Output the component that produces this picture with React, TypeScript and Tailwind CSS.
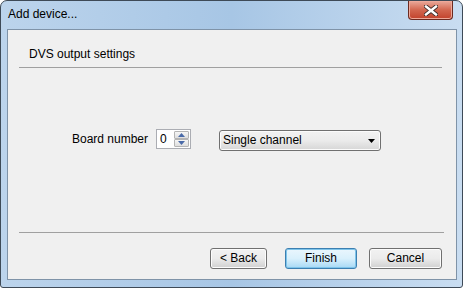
import React from 'react'

const font = { fontFamily: '"Segoe UI", "Liberation Sans", Arial, sans-serif' }

function CloseGlyph() {
  return (
    <svg width="14" height="11" viewBox="0 0 14 11">
      <path
        d="M2 1.5 L12 9.5 M12 1.5 L2 9.5"
        stroke="#3a2a28"
        strokeWidth="4.2"
        strokeLinecap="square"
        fill="none"
      />
      <path
        d="M2 1.5 L12 9.5 M12 1.5 L2 9.5"
        stroke="#ffffff"
        strokeWidth="2.4"
        strokeLinecap="square"
        fill="none"
      />
    </svg>
  )
}

function WinButton({ label, focused }: { label: string; focused?: boolean }) {
  return (
    <button
      className={
        focused
          ? 'flex h-[21px] w-full items-center justify-center rounded-[3px] border border-[#3c7fb1] bg-gradient-to-b from-[#eaf6fd] via-[#d9f0fc] to-[#a7d9f5] text-[12px] leading-[15px] text-black shadow-[inset_0_0_0_1px_#7ec4ea]'
          : 'flex h-[21px] w-full items-center justify-center rounded-[3px] border border-[#707070] bg-gradient-to-b from-[#f2f2f2] via-[#ebebeb] to-[#d0d0d0] text-[12px] leading-[15px] text-black shadow-[inset_0_0_0_1px_#fcfcfc]'
      }
    >
      {label}
    </button>
  )
}

export default function App() {
  return (
    <div className="h-[288px] w-[463px] overflow-hidden" style={font}>
      <div className="flex h-full w-full flex-col rounded-t-[7px] rounded-b-[3px] border border-[#3e4a57] bg-gradient-to-r from-[#bcd4ec] via-[#a7c6e5] to-[#c9ddf1] pb-[7px] pl-[6px] pr-[5px]">
        {/* Title bar */}
        <div className="flex h-[28px] items-start justify-between">
          <div className="pt-[6px] pl-[1px] text-[12px] leading-[15px] text-black">Add device...</div>
          <div className="mr-[4px] flex h-[19px] w-[45px] items-center justify-center rounded-b-[4px] border border-t-0 border-[#6b2a20] bg-gradient-to-b from-[#e9a99b] via-[#d2664f] to-[#c2412b] shadow-[inset_0_0_0_1px_#eea99a]">
            <CloseGlyph />
          </div>
        </div>

        {/* Client area */}
        <div className="flex flex-1 flex-col border border-[#7f93a8] bg-[#f0f0f0] text-[12px] text-black">
          <div className="pl-[21px] pt-[17px] leading-[15px]">DVS output settings</div>
          <div className="ml-[11px] mr-[14px] mt-[5px] h-px bg-[#a0a0a0]" />

          <div className="flex flex-1 items-start pt-[61px]">
            <div className="ml-[62px] flex h-[21px] w-[86px] items-center justify-end whitespace-nowrap pr-[8px] leading-[15px]">
              Board number
            </div>
            <div className="flex h-[20px]">
              <div className="flex h-[20px] w-[18px] items-center border border-r-0 border-[#abadb3] bg-white pl-[3px] text-[12px]">
                0
              </div>
              <div className="flex h-[20px] w-[17px] flex-col border border-l-0 border-[#abadb3] bg-white py-[1px] pr-[1px]">
                <div className="flex h-[9px] w-full items-center justify-center rounded-[1px] border border-[#b4b4b4] bg-gradient-to-b from-[#f6f6f6] to-[#dedede]">
                  <svg width="7" height="4" viewBox="0 0 7 4">
                    <path d="M0 4 L3.5 0 L7 4 Z" fill="#4a6aa8" />
                  </svg>
                </div>
                <div className="flex h-[9px] w-full items-center justify-center rounded-[1px] border border-[#b4b4b4] bg-gradient-to-b from-[#f6f6f6] to-[#dedede]">
                  <svg width="7" height="4" viewBox="0 0 7 4">
                    <path d="M0 0 L7 0 L3.5 4 Z" fill="#4a6aa8" />
                  </svg>
                </div>
              </div>
            </div>
            <div className="ml-[28px] mt-[1px] flex h-[21px] w-[162px] items-center justify-between rounded-[3px] border border-[#707070] bg-gradient-to-b from-[#f2f2f2] via-[#ebebeb] to-[#d6d6d6] pl-[3px] pr-[5px] shadow-[inset_0_0_0_1px_#fbfbfb]">
              <span className="leading-[15px]">Single channel</span>
              <svg width="7" height="4" viewBox="0 0 7 4">
                <path d="M0 0 L7 0 L3.5 4 Z" fill="#000" />
              </svg>
            </div>
          </div>

          <div className="ml-[11px] mr-[12px] h-px bg-[#a0a0a0]" />
          <div className="flex pb-[10px] pt-[15px]">
            <div className="ml-[202px] w-[57px]">
              <WinButton label="< Back" />
            </div>
            <div className="ml-[18px] w-[72px]">
              <WinButton label="Finish" focused />
            </div>
            <div className="ml-[12px] w-[73px]">
              <WinButton label="Cancel" />
            </div>
          </div>
        </div>
      </div>
    </div>
  )
}
